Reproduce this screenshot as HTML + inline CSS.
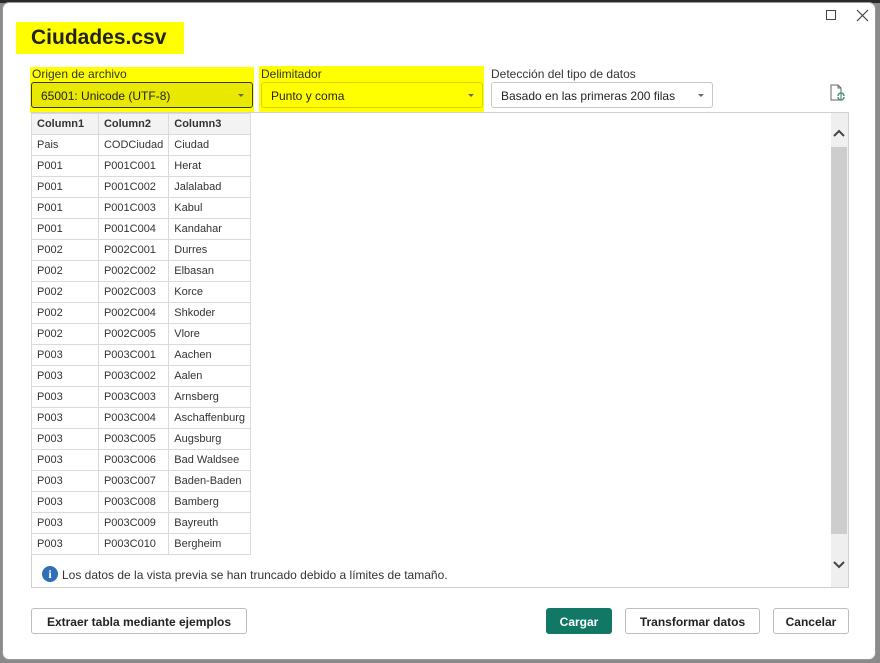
<!DOCTYPE html>
<html><head><meta charset="utf-8"><style>
*{box-sizing:border-box;margin:0;padding:0}
body{width:880px;height:663px;background:#8a8a8a;position:relative;overflow:hidden;font-family:"Liberation Sans",sans-serif;color:#252423}
.top{position:absolute;left:0;top:0;width:880px;height:3px;background:#2b2b2b}
.dlg{position:absolute;left:2px;top:2px;width:874px;height:658px;background:#fff;border-radius:7px;border:1px solid #999}
.abs{position:absolute}
.title{left:16px;top:22px;width:168px;height:32px;background:#ffff00;font-size:21px;font-weight:bold;padding:4px 0 0 15px;color:#222}
.lbl{font-size:12px;color:#333}
.sel{height:26px;border:1px solid #c8c8c8;border-radius:3px;font-size:12px;padding:6px 0 0 9px;background:#fff}
.sel:after{content:"";position:absolute;right:8px;top:11px;border:3px solid transparent;border-top:3px solid #666}
table{border-collapse:collapse;font-size:11px}
td{border:1px solid #dadada;height:21px;padding:0 5px;white-space:nowrap;color:#333}
th{border:1px solid #dadada;height:21px;padding:0 5px;background:#f3f3f3;text-align:left;font-weight:bold;font-size:11px;color:#333}
.btn{height:26px;border:1px solid #bdbdbd;border-radius:3px;font-size:12px;font-weight:bold;text-align:center;padding-top:6px;background:#fff;color:#222}
</style></head><body>
<div class="top"></div>
<div class="dlg"></div>
<div class="abs" style="left:826px;top:10px;width:10px;height:10px;border:1px solid #444"></div>
<svg class="abs" style="left:856px;top:9px" width="13" height="13"><path d="M1 1L12 12M12 1L1 12" stroke="#444" stroke-width="1.2"/></svg>
<div class="abs title">Ciudades.csv</div>
<div class="abs" style="left:30px;top:67px;width:224px;height:46px;background:#ffff00"></div>
<div class="abs" style="left:259px;top:66px;width:225px;height:47px;background:#ffff00"></div>
<div class="abs lbl" style="left:32px;top:67px">Origen de archivo</div>
<div class="abs lbl" style="left:261px;top:67px">Delimitador</div>
<div class="abs lbl" style="left:491px;top:67px">Detección del tipo de datos</div>
<div class="abs sel" style="left:31px;top:82px;width:222px;background:#e8e800;border:1px solid #333">65001: Unicode (UTF-8)</div>
<div class="abs sel" style="left:261px;top:82px;width:222px;background:#ffff00;border-color:#e0d000">Punto y coma</div>
<div class="abs sel" style="left:491px;top:82px;width:222px">Basado en las primeras 200 filas</div>
<svg class="abs" style="left:829px;top:84px" width="18" height="20"><path d="M2 1H9L12 4V16H2Z M9 1V4H12" fill="none" stroke="#666" stroke-width="1"/><path d="M9 12a3 3 0 0 1 6 0M15 13a3 3 0 0 1-6 0" fill="none" stroke="#3a9a6a" stroke-width="1.5"/></svg>
<div class="abs" style="left:31px;top:112px;width:818px;height:476px;border:1px solid #d0d0d0"></div>
<div class="abs" style="left:831px;top:113px;width:17px;height:474px;background:#efefef"></div>
<div class="abs" style="left:831px;top:147px;width:16px;height:387px;background:#cdcdcd"></div>
<svg class="abs" style="left:833px;top:128px" width="12" height="10"><path d="M1 8L6 3L11 8" fill="none" stroke="#444" stroke-width="2"/></svg>
<svg class="abs" style="left:833px;top:560px" width="12" height="10"><path d="M1 2L6 7L11 2" fill="none" stroke="#444" stroke-width="2"/></svg>
<table class="abs" style="left:31px;top:113px;width:220px">
<tr><th style="width:69px">Column1</th><th style="width:70px">Column2</th><th>Column3</th></tr>
<tr><td>Pais</td><td>CODCiudad</td><td>Ciudad</td></tr>
<tr><td>P001</td><td>P001C001</td><td>Herat</td></tr>
<tr><td>P001</td><td>P001C002</td><td>Jalalabad</td></tr>
<tr><td>P001</td><td>P001C003</td><td>Kabul</td></tr>
<tr><td>P001</td><td>P001C004</td><td>Kandahar</td></tr>
<tr><td>P002</td><td>P002C001</td><td>Durres</td></tr>
<tr><td>P002</td><td>P002C002</td><td>Elbasan</td></tr>
<tr><td>P002</td><td>P002C003</td><td>Korce</td></tr>
<tr><td>P002</td><td>P002C004</td><td>Shkoder</td></tr>
<tr><td>P002</td><td>P002C005</td><td>Vlore</td></tr>
<tr><td>P003</td><td>P003C001</td><td>Aachen</td></tr>
<tr><td>P003</td><td>P003C002</td><td>Aalen</td></tr>
<tr><td>P003</td><td>P003C003</td><td>Arnsberg</td></tr>
<tr><td>P003</td><td>P003C004</td><td>Aschaffenburg</td></tr>
<tr><td>P003</td><td>P003C005</td><td>Augsburg</td></tr>
<tr><td>P003</td><td>P003C006</td><td>Bad Waldsee</td></tr>
<tr><td>P003</td><td>P003C007</td><td>Baden-Baden</td></tr>
<tr><td>P003</td><td>P003C008</td><td>Bamberg</td></tr>
<tr><td>P003</td><td>P003C009</td><td>Bayreuth</td></tr>
<tr><td>P003</td><td>P003C010</td><td>Bergheim</td></tr>
</table>
<div class="abs" style="left:42px;top:566px;width:16px;height:16px;border-radius:50%;background:#2e6fb5;color:#fff;font-size:12px;font-weight:bold;text-align:center;line-height:16px;font-family:'Liberation Serif',serif">i</div>
<div class="abs" style="left:62px;top:568px;font-size:12px;color:#333">Los datos de la vista previa se han truncado debido a límites de tamaño.</div>
<div class="abs btn" style="left:31px;top:608px;width:216px">Extraer tabla mediante ejemplos</div>
<div class="abs btn" style="left:546px;top:608px;width:66px;background:#117865;border-color:#117865;color:#fff">Cargar</div>
<div class="abs btn" style="left:625px;top:608px;width:135px">Transformar datos</div>
<div class="abs btn" style="left:773px;top:608px;width:76px">Cancelar</div>
</body></html>
